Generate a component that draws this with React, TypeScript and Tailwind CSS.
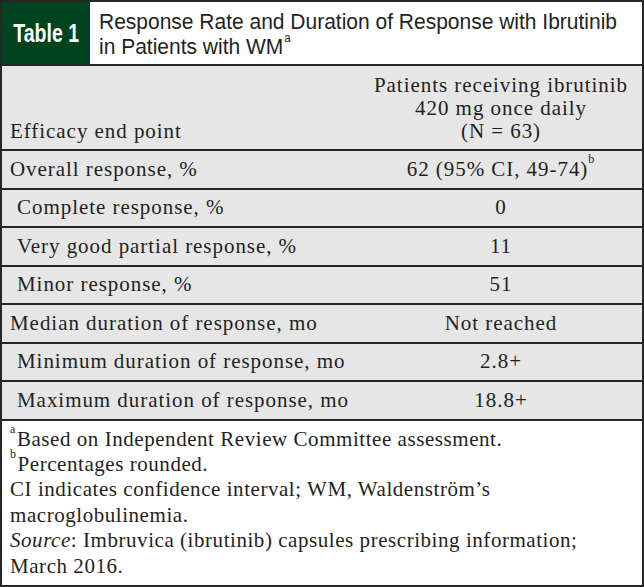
const rows = [
  { label: "Overall response, %", value: "62 (95% CI, 49-74)", sup: "b", indent: false },
  { label: "Complete response, %", value: "0", indent: true },
  { label: "Very good partial response, %", value: "11", indent: true },
  { label: "Minor response, %", value: "51", indent: true },
  { label: "Median duration of response, mo", value: "Not reached", indent: false },
  { label: "Minimum duration of response, mo", value: "2.8+", indent: true },
  { label: "Maximum duration of response, mo", value: "18.8+", indent: true },
];

const serif = "font-['Liberation_Serif',serif]";
const sans = "font-['Liberation_Sans',Arial,sans-serif]";

export default function App() {
  return (
    <div className="w-[644px] h-[587px] bg-white text-[#231f20] border-2 border-[#262626] flex flex-col overflow-hidden">
      {/* title bar */}
      <div className="flex h-[64px] shrink-0 border-b-2 border-[#262626]">
        <div className="w-[88px] bg-[#00441f] flex items-center justify-center">
          <span className={`inline-block scale-x-[0.78] text-white font-bold text-[25px] leading-none whitespace-nowrap ${sans}`}>
            Table 1
          </span>
        </div>
        <div className={`flex-1 min-w-0 pl-[9px] pt-[7px] text-[22px] leading-[25px] overflow-hidden ${sans}`}>
          <div className="w-[560px] origin-top-left scale-x-[0.954] whitespace-nowrap">
            Response Rate and Duration of Response with Ibrutinib
            <br />
            in Patients with WM
            <sup className="text-[12px] align-top relative top-[4px] ml-[1px]">a</sup>
          </div>
        </div>
      </div>

      {/* column headings */}
      <div className={`flex h-[85px] shrink-0 bg-[#e6e6e6] border-b-2 border-[#262626] items-end pb-[6px] text-[21px] leading-[23px] tracking-[0.95px] ${serif}`}>
        <div className="w-[358px] pl-[8px]">Efficacy end point</div>
        <div className="flex-1 text-center">
          Patients receiving ibrutinib
          <br />
          420 mg once daily
          <br />
          (N = 63)
        </div>
      </div>

      {/* body rows */}
      {rows.map((r) => (
        <div
          key={r.label}
          className={`flex h-[38.5px] shrink-0 bg-[#e6e6e6] border-b-2 border-[#262626] items-center text-[21px] leading-[23px] tracking-[0.95px] ${serif}`}
        >
          <div className={r.indent ? "w-[358px] pl-[15px]" : "w-[358px] pl-[8px]"}>{r.label}</div>
          <div className="flex-1 text-center">
            {r.value}
            {r.sup && <sup className="text-[12px] align-top relative top-[1px]">{r.sup}</sup>}
          </div>
        </div>
      ))}

      {/* notes */}
      <div className={`flex-1 pt-[6px] pl-[8px] text-[21px] leading-[25.4px] tracking-[0.55px] ${serif}`}>
        <p>
          <sup className="text-[12px] align-top relative top-[2px] mr-[1px]">a</sup>Based on Independent Review Committee assessment.
        </p>
        <p>
          <sup className="text-[12px] align-top relative top-[2px] mr-[1px]">b</sup>Percentages rounded.
        </p>
        <p>
          CI indicates confidence interval; WM, Waldenström’s
          <br />
          macroglobulinemia.
        </p>
        <p>
          <i>Source</i>: Imbruvica (ibrutinib) capsules prescribing information;
          <br />
          March 2016.
        </p>
      </div>
    </div>
  );
}
